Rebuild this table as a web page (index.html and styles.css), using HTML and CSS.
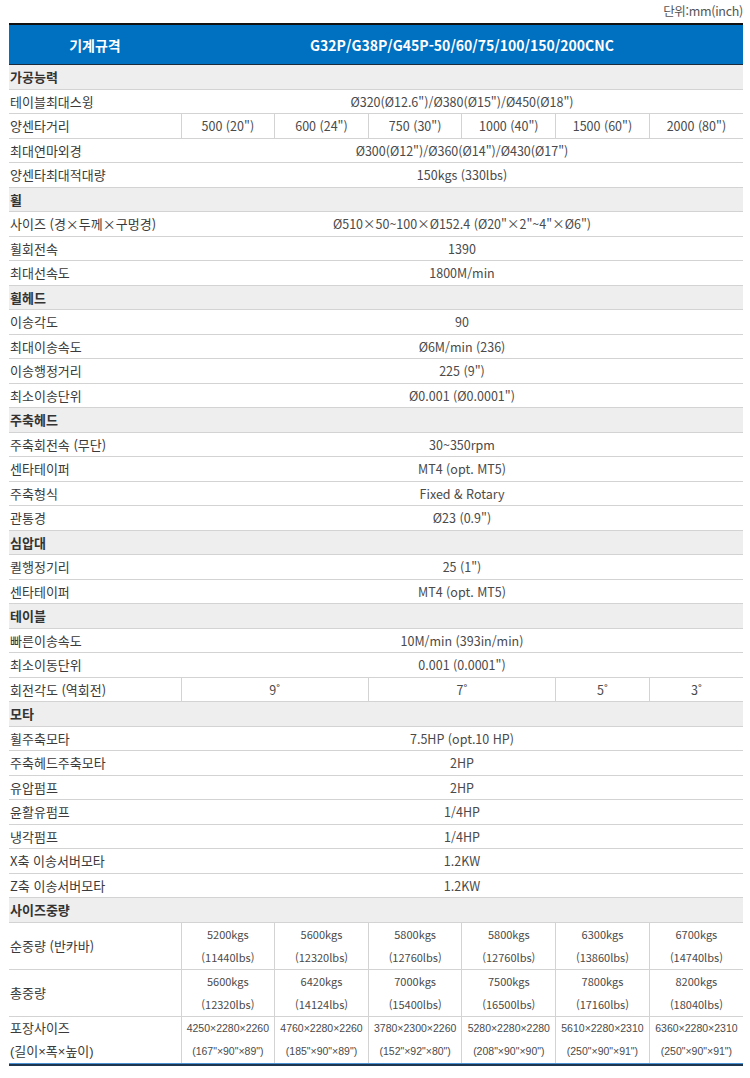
FILE: index.html
```html
<!DOCTYPE html>
<html lang="ko">
<head>
<meta charset="utf-8">
<title>기계규격</title>
<link rel="stylesheet" href="styles.css">
</head>
<body>
<div class="wrap">
  <div class="unit">단위:mm(inch)</div>
  <table class="spec">
    <colgroup>
      <col class="c-label"><col><col><col><col><col><col>
    </colgroup>
    <thead>
      <tr class="head"><th>기계규격</th><th colspan="6">G32P/G38P/G45P-50/60/75/100/150/200CNC</th></tr>
    </thead>
    <tbody>
      <tr class="sec"><td colspan="7">가공능력</td></tr>
      <tr><td class="lb">테이블최대스윙</td><td colspan="6">Ø320(Ø12.6")/Ø380(Ø15")/Ø450(Ø18")</td></tr>
      <tr class="split"><td class="lb">양센타거리</td><td>500 (20")</td><td>600 (24")</td><td>750 (30")</td><td>1000 (40")</td><td>1500 (60")</td><td>2000 (80")</td></tr>
      <tr><td class="lb">최대연마외경</td><td colspan="6">Ø300(Ø12")/Ø360(Ø14")/Ø430(Ø17")</td></tr>
      <tr><td class="lb">양센타최대적대량</td><td colspan="6">150kgs (330lbs)</td></tr>

      <tr class="sec"><td colspan="7">휠</td></tr>
      <tr><td class="lb">사이즈 (경×두께×구멍경)</td><td colspan="6">Ø510×50~100×Ø152.4 (Ø20"×2"~4"×Ø6")</td></tr>
      <tr><td class="lb">휠회전속</td><td colspan="6">1390</td></tr>
      <tr><td class="lb">최대선속도</td><td colspan="6">1800M/min</td></tr>

      <tr class="sec"><td colspan="7">휠헤드</td></tr>
      <tr><td class="lb">이송각도</td><td colspan="6">90</td></tr>
      <tr><td class="lb">최대이송속도</td><td colspan="6">Ø6M/min (236)</td></tr>
      <tr><td class="lb">이송행정거리</td><td colspan="6">225 (9")</td></tr>
      <tr><td class="lb">최소이송단위</td><td colspan="6">Ø0.001 (Ø0.0001")</td></tr>

      <tr class="sec"><td colspan="7">주축헤드</td></tr>
      <tr><td class="lb">주축회전속 (무단)</td><td colspan="6">30~350rpm</td></tr>
      <tr><td class="lb">센타테이퍼</td><td colspan="6">MT4 (opt. MT5)</td></tr>
      <tr><td class="lb">주축형식</td><td colspan="6">Fixed &amp; Rotary</td></tr>
      <tr><td class="lb">관통경</td><td colspan="6">Ø23 (0.9")</td></tr>

      <tr class="sec"><td colspan="7">심압대</td></tr>
      <tr><td class="lb">퀼행정기리</td><td colspan="6">25 (1")</td></tr>
      <tr><td class="lb">센타테이퍼</td><td colspan="6">MT4 (opt. MT5)</td></tr>

      <tr class="sec"><td colspan="7">테이블</td></tr>
      <tr><td class="lb">빠른이송속도</td><td colspan="6">10M/min (393in/min)</td></tr>
      <tr><td class="lb">최소이동단위</td><td colspan="6">0.001 (0.0001")</td></tr>
      <tr class="split"><td class="lb">회전각도 (역회전)</td><td colspan="2">9˚</td><td colspan="2">7˚</td><td>5˚</td><td>3˚</td></tr>

      <tr class="sec"><td colspan="7">모타</td></tr>
      <tr><td class="lb">휠주축모타</td><td colspan="6">7.5HP (opt.10 HP)</td></tr>
      <tr><td class="lb">주축헤드주축모타</td><td colspan="6">2HP</td></tr>
      <tr><td class="lb">유압펌프</td><td colspan="6">2HP</td></tr>
      <tr><td class="lb">윤활유펌프</td><td colspan="6">1/4HP</td></tr>
      <tr><td class="lb">냉각펌프</td><td colspan="6">1/4HP</td></tr>
      <tr><td class="lb">X축 이송서버모타</td><td colspan="6">1.2KW</td></tr>
      <tr><td class="lb">Z축 이송서버모타</td><td colspan="6">1.2KW</td></tr>

      <tr class="sec"><td colspan="7">사이즈중량</td></tr>
      <tr class="split tall"><td class="lb">순중량 (반카바)</td><td>5200kgs<br>(11440lbs)</td><td>5600kgs<br>(12320lbs)</td><td>5800kgs<br>(12760lbs)</td><td>5800kgs<br>(12760lbs)</td><td>6300kgs<br>(13860lbs)</td><td>6700kgs<br>(14740lbs)</td></tr>
      <tr class="split tall"><td class="lb">총중량</td><td>5600kgs<br>(12320lbs)</td><td>6420kgs<br>(14124lbs)</td><td>7000kgs<br>(15400lbs)</td><td>7500kgs<br>(16500lbs)</td><td>7800kgs<br>(17160lbs)</td><td>8200kgs<br>(18040lbs)</td></tr>
      <tr class="split tall last"><td class="lb">포장사이즈<br>(길이×폭×높이)</td><td>4250×2280×2260<br>(167"×90"×89")</td><td>4760×2280×2260<br>(185"×90"×89")</td><td>3780×2300×2260<br>(152"×92"×80")</td><td>5280×2280×2280<br>(208"×90"×90")</td><td>5610×2280×2310<br>(250"×90"×91")</td><td>6360×2280×2310<br>(250"×90"×91")</td></tr>
    </tbody>
  </table>
  <div class="table-end"></div>
</div>
</body>
</html>
```

FILE: styles.css
```css
html, body {
  margin: 0;
  padding: 0;
  background: #fff;
}
body {
  font-family: "Noto Sans CJK KR", "Noto Sans", sans-serif;
  color: #444;
}
.wrap {
  width: 734px;
  margin-left: 9px;
}
.unit {
  height: 23px;
  line-height: 22px;
  text-align: right;
  font-size: 12.5px;
  color: #555;
  letter-spacing: -0.3px;
}
.spec {
  width: 734px;
  border-collapse: collapse;
  table-layout: fixed;
}
.c-label {
  width: 172px;
}
.spec th {
  background: #0070c0;
  color: #fff;
  font-weight: 700;
  font-size: 14px;
  height: 39px;
  padding: 0;
  text-align: center;
  border-top: 2px solid #111;
  border-bottom: 1px solid #1b2b3c;
}
.spec td {
  padding: 0;
  height: 23.5px;
  line-height: 23.5px;
  font-size: 12.5px;
  text-align: center;
  border-bottom: 1px solid #d3d3d3;
  color: #4a4a4a;
  white-space: nowrap;
  overflow: hidden;
}
.spec td.lb {
  text-align: left;
  padding-left: 1px;
  font-size: 13px;
  color: #3a3a3a;
}
.spec tr.split td + td {
  border-left: 1px solid #d3d3d3;
}
.spec tr.sec td {
  background: #eeeeee;
  text-align: left;
  padding-left: 1px;
  font-weight: 700;
  font-size: 13px;
  color: #333;
}
.spec tr.tall td {
  height: 46px;
  line-height: 23px;
  font-size: 11px;
  vertical-align: middle;
}
.spec tr.last td {
  font-family: "Liberation Sans", "Noto Sans CJK KR", sans-serif;
  font-size: 10.5px;
  border-bottom: none;
}
.spec tr.tall td.lb {
  font-size: 13px;
}
.table-end {
  height: 1px;
  background: #4a92d4;
  border-bottom: 2px solid #1f3650;
}
```
